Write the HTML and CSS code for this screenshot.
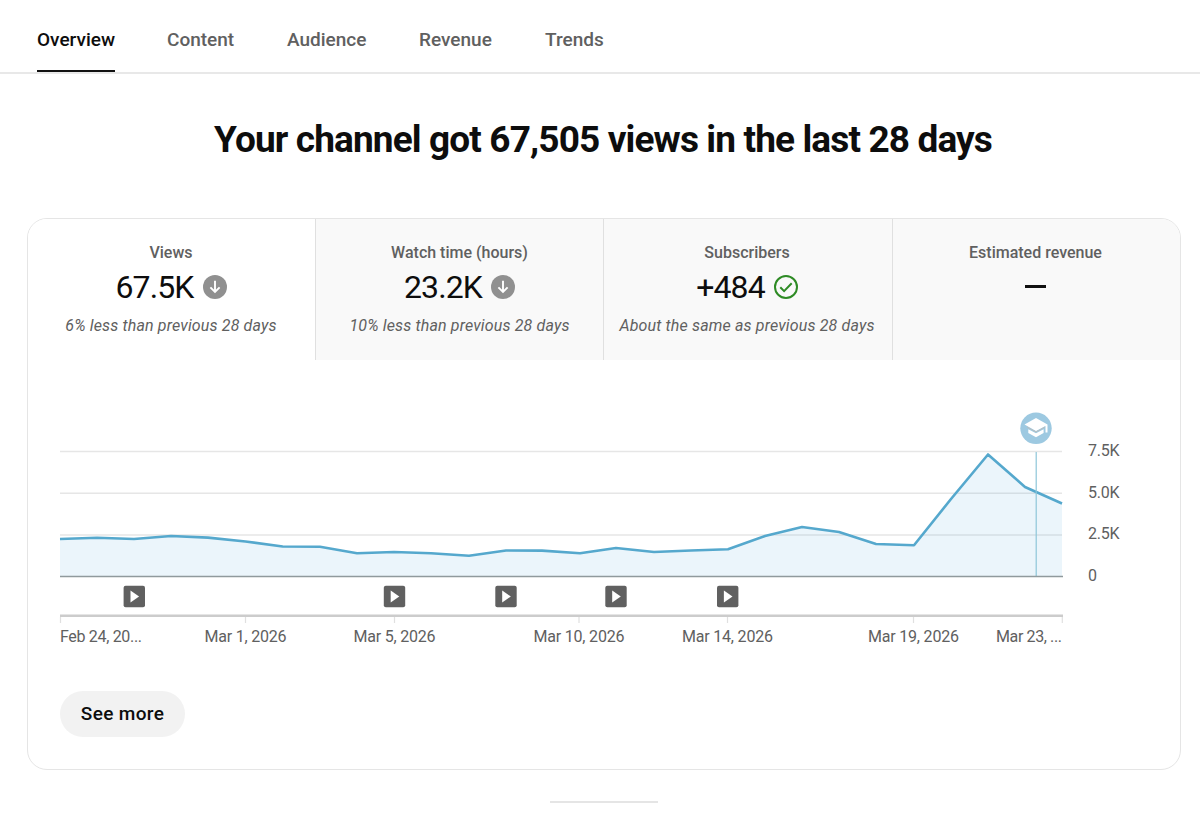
FILE: index.html
```html
<!DOCTYPE html>
<html lang="en">
<head>
<meta charset="utf-8">
<title>Channel analytics</title>
<link rel="stylesheet" href="styles.css">
</head>
<body>
<nav class="tabs">
  <a class="tab active t-overview"><span>Overview</span></a>
  <a class="tab t-content"><span>Content</span></a>
  <a class="tab t-audience"><span>Audience</span></a>
  <a class="tab t-revenue"><span>Revenue</span></a>
  <a class="tab t-trends"><span>Trends</span></a>
</nav>
<h1 class="headline"><span>Your channel got 67,505 views in the last 28 days</span></h1>
<main class="card">
  <section class="metrics">
    <div class="metric selected">
      <div class="label">Views</div>
      <div class="value"><span>67.5K</span>
        <svg class="icon" viewBox="0 0 24 24"><circle cx="12" cy="12" r="12" fill="#909090"/><path d="M12 5.8v11M7.4 12.4l4.6 4.6 4.6-4.6" fill="none" stroke="#fff" stroke-width="1.9"/></svg>
      </div>
      <div class="note">6% less than previous 28 days</div>
    </div>
    <div class="metric">
      <div class="label">Watch time (hours)</div>
      <div class="value"><span>23.2K</span>
        <svg class="icon" viewBox="0 0 24 24"><circle cx="12" cy="12" r="12" fill="#909090"/><path d="M12 5.8v11M7.4 12.4l4.6 4.6 4.6-4.6" fill="none" stroke="#fff" stroke-width="1.9"/></svg>
      </div>
      <div class="note">10% less than previous 28 days</div>
    </div>
    <div class="metric">
      <div class="label">Subscribers</div>
      <div class="value"><span>+484</span>
        <svg class="icon" viewBox="0 0 24 24"><circle cx="12" cy="12" r="11" fill="none" stroke="#2e8b25" stroke-width="2"/><path d="M6.3 12.3l3.8 3.8 7.6-7.8" fill="none" stroke="#2e8b25" stroke-width="2"/></svg>
      </div>
      <div class="note">About the same as previous 28 days</div>
    </div>
    <div class="metric">
      <div class="label">Estimated revenue</div>
      <div class="value"><span class="dash"></span></div>
    </div>
  </section>
  <svg class="chart" viewBox="28 361 1152 300">
    <defs>
      <g id="video"><rect x="-10.7" y="-10.7" width="21.4" height="21.4" rx="2" fill="#606060"/><path d="M-3.8-6v12L4.8 0z" fill="#fff"/></g>
    </defs>
    <g class="grid"><path d="M60 451.5H1062M60 493.2H1062M60 535H1062"/></g>
    <path class="area" d="M60 539L97 537.7 134 539 171 536 208 537.6 245.500 541.500 282.700 546.500 320 546.700 357 553.200 394 552 431 553.200 469 555.700 506 550.500 542 550.600 580 553.300 616 548 654 552 691 550.500 728 549.300 765 536 802 527 839 532 876 544 914 545.300 951 499 988 454.500 1025 487 1062 503.500V576H60z"/>
    <path class="line" d="M60 539L97 537.7 134 539 171 536 208 537.6 245.500 541.500 282.700 546.500 320 546.700 357 553.200 394 552 431 553.200 469 555.700 506 550.500 542 550.600 580 553.300 616 548 654 552 691 550.500 728 549.300 765 536 802 527 839 532 876 544 914 545.300 951 499 988 454.500 1025 487 1062 503.500"/>
    <path d="M1036.200 452V576" stroke="#8dc6d9" stroke-width="1.2"/>
    <path d="M60 576.500H1063" stroke="#909a9d" stroke-width="1.600"/>
    <path d="M60 615.800H1063" stroke="#ccc" stroke-width="2.600"/>
    <path d="M60.500 617v6M245.500 617v6M394.500 617v6M579 617v6M727.500 617v6M913.500 617v6M1062.300 617v6" stroke="#e0e0e0" stroke-width="1.200"/>
    <use href="#video" x="134.300" y="596.500"/>
    <use href="#video" x="394.500" y="596.500"/>
    <use href="#video" x="506" y="596.500"/>
    <use href="#video" x="616" y="596.500"/>
    <use href="#video" x="727.700" y="596.500"/>
    <circle cx="1036" cy="428.300" r="15.700" fill="#9dc9e1"/>
    <path d="M1036 418L1047.500 424.500V432.500H1045.500V426L1036 431 1024.500 424.500z" fill="#fff"/>
    <path d="M1028.300 429.200L1036 433.300 1043.600 429.200V433L1036 437.200 1028.300 433z" fill="#fff"/>
    <path d="M1027 427L1036 431.900 1045 427" fill="none" stroke="#b9bec0" stroke-width="1"/>
    <g class="ticks">
      <text x="1088" y="456" textLength="31.500">7.5K</text>
      <text x="1088" y="497.700" textLength="31.500">5.0K</text>
      <text x="1088" y="539.300" textLength="31.500">2.5K</text>
      <text x="1088" y="581">0</text>
      <text x="60" y="642" textLength="82">Feb 24, 20...</text>
      <text x="204.500" y="642" textLength="82">Mar 1, 2026</text>
      <text x="353.500" y="642" textLength="82">Mar 5, 2026</text>
      <text x="533.500" y="642" textLength="91">Mar 10, 2026</text>
      <text x="682" y="642" textLength="91">Mar 14, 2026</text>
      <text x="868" y="642" textLength="91">Mar 19, 2026</text>
      <text x="996" y="642" textLength="66">Mar 23, ...</text>
    </g>
  </svg>
  <button class="more">See more</button>
</main>
<div class="handle"></div>
</body>
</html>
```
FILE: styles.css
```css
* { box-sizing: border-box; }
body {
  margin: 0;
  height: 813px;
  overflow: hidden;
  background: #fff;
  color: #0d0d0d;
  font-family: Roboto, sans-serif;
}
.tabs {
  display: flex;
  gap: 52px;
  height: 74px;
  padding-left: 37px;
  border-bottom: 2px solid #e8e8e8;
}
.tab {
  height: 72px;
  padding-top: 29px;
  font-size: 19px;
  line-height: 22px;
  font-weight: 500;
  color: #606060;
  white-space: nowrap;
}
.tab.active { color: #0d0d0d; border-bottom: 2px solid #111; }
.t-overview { width: 78px; }
.t-content { width: 68px; }
.t-audience { width: 80px; }
.t-revenue { width: 74px; }
.headline {
  margin: 43px 0 0;
  padding-left: 6px;
  height: 46px;
  font-size: 37px;
  line-height: 46px;
  font-weight: 700;
  text-align: center;
  letter-spacing: -0.87px;
  white-space: nowrap;
}
.card {
  margin: 55px 19px 0 27px;
  height: 552px;
  border: 1.5px solid #e5e5e5;
  border-radius: 20px;
  overflow: hidden;
}
.metrics {
  display: grid;
  grid-template-columns: 287px 288px 289px 1fr;
  height: 141px;
}
.metric {
  padding-top: 23px;
  text-align: center;
  background: #f9f9f9;
  border-left: 1.500px solid #e0e0e0;
  white-space: nowrap;
}
.metric:nth-child(3) { padding-right: 2px; }
.metric:last-child { padding-right: 2px; }
.metric.selected { background: #fff; border-left: 0; padding-right: 1px; }
.label { font-size: 16px; line-height: 22px; font-weight: 500; color: #606060; }
.value {
  display: flex;
  justify-content: center;
  align-items: center;
  gap: 9px;
  height: 45px;
  font-size: 32px;
  letter-spacing: -0.85px;
}
.icon { width: 24px; height: 24px; }
.dash { width: 21px; height: 2.500px; background: #111; }
.note { font-size: 16px; line-height: 34px; font-style: italic; color: #606060; letter-spacing: 0.150px; }
.chart { display: block; width: 1152px; height: 300px; margin-top: 1px; }
.grid { stroke: #e6e6e6; stroke-width: 1.500; }
.area { fill: #3e9fd3; fill-opacity: 0.100; }
.line { fill: none; stroke: #55a8cd; stroke-width: 2.600; stroke-linejoin: round; }
.ticks { font-size: 16px; fill: #606060; }
.more {
  display: block;
  margin: 30px 0 0 32px;
  width: 125px;
  height: 46px;
  padding: 0 0 2px;
  border: 0;
  border-radius: 23px;
  background: #f2f2f2;
  color: #0d0d0d;
  font-family: Roboto, sans-serif;
  font-size: 19px;
  font-weight: 500;
  letter-spacing: 0.350px;
}
.handle { width: 108px; height: 2px; margin: 31px 0 0 550px; background: #e5e5e5; }
```
